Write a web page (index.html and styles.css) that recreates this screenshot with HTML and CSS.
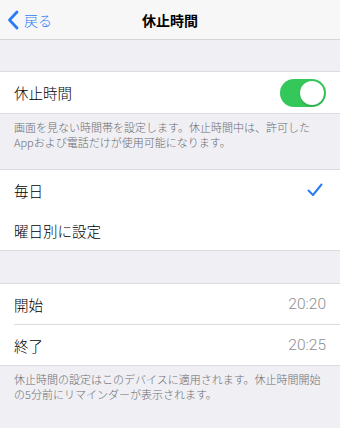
FILE: index.html
```html
<!DOCTYPE html>
<html lang="ja">
<head>
<meta charset="utf-8">
<link rel="stylesheet" href="styles.css">
</head>
<body>
<div class="nav">
  <div class="back">
    <svg class="chev" width="12" height="20" viewBox="0 0 12 20"><polyline points="10,2 2.5,10 10,18" fill="none" stroke="#2a7cf6" stroke-width="2.8" stroke-linecap="round" stroke-linejoin="round"/></svg>
    <span>戻る</span>
  </div>
  <div class="title">休止時間</div>
</div>
<div class="gap g1"></div>
<div class="section">
  <div class="row r42">
    <span class="label">休止時間</span>
    <div class="toggle"><div class="knob"></div></div>
  </div>
</div>
<div class="foot f1">画面を見ない時間帯を設定します。休止時間中は、許可したAppおよび電話だけが使用可能になります。</div>
<div class="section">
  <div class="row r40">
    <span class="label">毎日</span>
    <svg class="check" width="16" height="14" viewBox="0 0 16 14"><polyline points="1.5,7.5 6,12 14.5,1.5" fill="none" stroke="#2a7cf6" stroke-width="2" stroke-linecap="round" stroke-linejoin="round"/></svg>
  </div>
  <div class="row r40">
    <span class="label">曜日別に設定</span>
  </div>
</div>
<div class="gap g2"></div>
<div class="section">
  <div class="row sep">
    <span class="label">開始</span>
    <span class="value">20:20</span>
  </div>
  <div class="row r41">
    <span class="label">終了</span>
    <span class="value">20:25</span>
  </div>
</div>
<div class="foot f2">休止時間の設定はこのデバイスに適用されます。休止時間開始の5分前にリマインダーが表示されます。</div>
</body>
</html>
```
FILE: styles.css
```css
html, body {
  margin: 0;
  padding: 0;
}
body {
  width: 340px;
  height: 428px;
  overflow: hidden;
  background: #efeff4;
  font-family: "Noto Sans CJK JP", "Noto Sans", sans-serif;
  color: #000;
}
.nav {
  height: 39px;
  background: #f7f7f8;
  border-bottom: 1px solid #d6d6da;
  display: flex;
  align-items: center;
  justify-content: center;
  position: relative;
}
.back {
  position: absolute;
  left: 7px;
  top: 0;
  height: 39px;
  display: flex;
  align-items: center;
  gap: 5px;
  color: #2a7cf6;
  font-size: 14px;
  font-weight: 300;
}
.chev {
  display: block;
}
.title {
  font-size: 14px;
  font-weight: bold;
}
.gap.g1 {
  height: 31px;
}
.gap.g2 {
  height: 32px;
}
.section {
  background: #fff;
  border-top: 1px solid #dcdce0;
  border-bottom: 1px solid #dcdce0;
}
.row {
  display: flex;
  align-items: center;
  justify-content: space-between;
  padding: 0 14px;
  position: relative;
}
.r42 { height: 41px; }
.r40 { height: 40px; }
.r41 { height: 40px; }
.row.sep {
  height: 40px;
  padding-bottom: 1px;
}
.row.sep::after {
  content: "";
  position: absolute;
  left: 14px;
  right: 0;
  bottom: 0;
  height: 1px;
  background: #dcdce0;
}
.label {
  font-size: 14.5px;
  font-weight: 300;
}
.value {
  font-family: "Roboto", "Noto Sans", sans-serif;
  font-size: 15.5px;
  font-weight: 300;
  color: #8e8e93;
}
.toggle {
  width: 46px;
  height: 28px;
  border-radius: 14px;
  background: #34c759;
  position: relative;
}
.knob {
  position: absolute;
  right: 2px;
  top: 2px;
  width: 24px;
  height: 24px;
  border-radius: 50%;
  background: #fff;
  box-shadow: 0 1px 2px rgba(0,0,0,0.2);
}
.check {
  display: block;
  margin-right: 3px;
}
.foot {
  font-size: 11px;
  line-height: 15px;
  color: #6d6d72;
  padding: 6px 14px 0 14px;
  font-weight: 300;
}
.foot.f1 {
  height: 49px;
}
```
